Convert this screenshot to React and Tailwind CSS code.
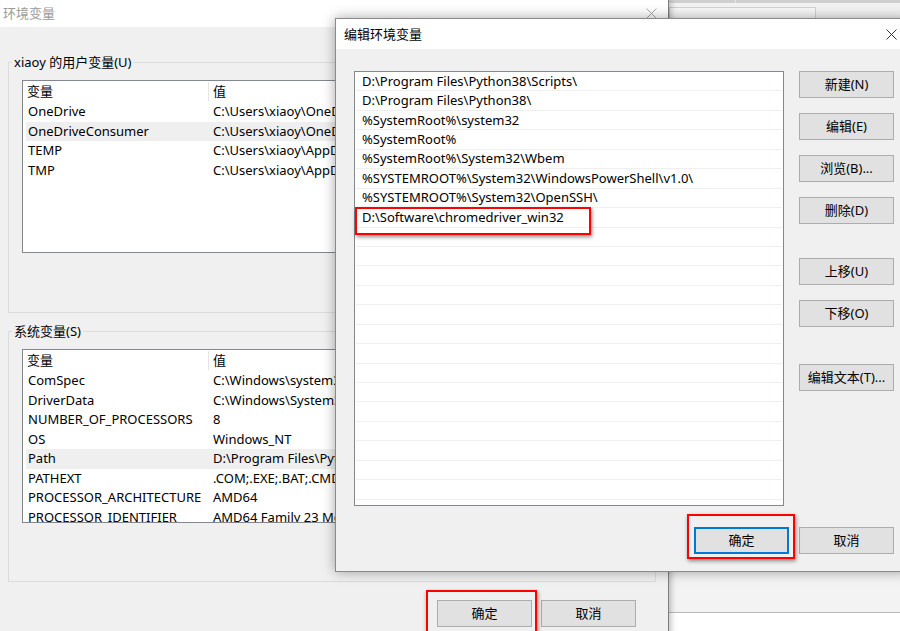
import React from "react";

const userVars = [
  ["OneDrive", "C:\\Users\\xiaoy\\OneDrive"],
  ["OneDriveConsumer", "C:\\Users\\xiaoy\\OneDrive"],
  ["TEMP", "C:\\Users\\xiaoy\\AppData\\Local\\Temp"],
  ["TMP", "C:\\Users\\xiaoy\\AppData\\Local\\Temp"],
];

const systemVars = [
  ["ComSpec", "C:\\Windows\\system32\\cmd.exe"],
  ["DriverData", "C:\\Windows\\System32\\Drivers\\DriverData"],
  ["NUMBER_OF_PROCESSORS", "8"],
  ["OS", "Windows_NT"],
  ["Path", "D:\\Program Files\\Python38\\Scripts\\;D:\\Program Files\\Python38\\"],
  ["PATHEXT", ".COM;.EXE;.BAT;.CMD;.VBS;.VBE;.JS;.JSE;.WSF;.WSH;.MSC"],
  ["PROCESSOR_ARCHITECTURE", "AMD64"],
  ["PROCESSOR_IDENTIFIER", "AMD64 Family 23 Model 96 Stepping 1, AuthenticAMD"],
];

const paths = [
  "D:\\Program Files\\Python38\\Scripts\\",
  "D:\\Program Files\\Python38\\",
  "%SystemRoot%\\system32",
  "%SystemRoot%",
  "%SystemRoot%\\System32\\Wbem",
  "%SYSTEMROOT%\\System32\\WindowsPowerShell\\v1.0\\",
  "%SYSTEMROOT%\\System32\\OpenSSH\\",
  "D:\\Software\\chromedriver_win32",
];

function CloseIcon({ color }) {
  return (
    <svg width="11" height="11" viewBox="0 0 11 11">
      <path d="M0.5 0.5 L10.5 10.5 M10.5 0.5 L0.5 10.5" stroke={color} strokeWidth="1" fill="none" />
    </svg>
  );
}

function WinButton({ children, focused, className = "" }) {
  return (
    <div
      className={
        "w-[95px] h-[27px] flex items-center justify-center bg-[#e1e1e1] border " +
        (focused ? "border-[#0078d7] ring-1 ring-inset ring-[#0078d7] " : "border-[#adadad] ") +
        className
      }
    >
      {children}
    </div>
  );
}

function VarList({ rows, highlight, height }) {
  return (
    <div className={"w-[620px] bg-white border border-[#828790] overflow-hidden " + height}>
      <div className="flex h-[21px] items-center">
        <div className="w-[186px] h-[19px] pl-[4px] flex items-center border-r border-[#e5e5e5]">变量</div>
        <div className="pl-[4px]">值</div>
      </div>
      {rows.map(([name, value]) => (
        <div
          key={name}
          className={
            "ml-[3px] flex h-[19.5px] items-center whitespace-nowrap " +
            (name === highlight ? "bg-[#efefef]" : "")
          }
        >
          <span className="w-[187px] pl-[2px]">{name}</span>
          <span>{value}</span>
        </div>
      ))}
    </div>
  );
}

export default function App() {
  return (
    <div className="relative w-[900px] h-[631px] overflow-hidden bg-[#f3f3f3] text-[13px] leading-none text-black font-['Noto_Sans','Noto_Sans_CJK_SC',sans-serif]">
      {/* window behind, on the right */}
      <div className="absolute left-[668px] top-0 w-[232px] h-[631px] flex flex-col bg-[#f3f3f3]">
        <div className="h-[3px] flex bg-[#cfcfcf]">
          <div className="w-[68px] border-r border-[#e6e6e6]" />
        </div>
        <div className="mt-[4px] ml-[1px] w-[147px] h-[12px] border border-[#d2d2d2] bg-[#f7f7f7]" />
        <div className="flex-1" />
        <div className="h-[19px] border-t border-[#b9b9b9] bg-white" />
      </div>

      {/* 环境变量 window */}
      <div className="absolute left-0 top-0 w-[669px] h-[640px] flex flex-col bg-[#f0f0f0] border-r border-[#7d7d7d] shadow-[2px_0_6px_rgba(0,0,0,0.25)]">
        <div className="h-[27px] bg-white flex items-center justify-between pl-[3px] pr-[11px]">
          <span className="text-[#9b9b9b]">环境变量</span>
          <CloseIcon color="#a5a5a5" />
        </div>

        <div className="pl-[8px]">
          <fieldset className="mt-[26px] w-[648px] h-[260px] border border-[#dcdcdc]">
            <legend className="ml-[3px] px-[2px] leading-[18px]">xiaoy 的用户变量(U)</legend>
            <div className="mt-[9px] ml-[13px]">
              <VarList rows={userVars} highlight="OneDriveConsumer" height="h-[173px]" />
            </div>
          </fieldset>

          <fieldset className="mt-[9px] w-[648px] h-[260px] border border-[#dcdcdc]">
            <legend className="ml-[3px] px-[2px] leading-[18px]">系统变量(S)</legend>
            <div className="mt-[9px] ml-[13px]">
              <VarList rows={systemVars} highlight="Path" height="h-[174px]" />
            </div>
          </fieldset>
        </div>

        <div className="mt-[18px] pr-[32px] flex justify-end gap-[9px]">
          <WinButton>确定</WinButton>
          <WinButton>取消</WinButton>
        </div>
      </div>

      {/* 编辑环境变量 dialog */}
      <div className="absolute left-[335px] top-[18px] w-[575px] h-[554px] flex flex-col bg-[#f0f0f0] border border-[#8a8a8a] shadow-[0_0_12px_rgba(0,0,0,0.35)]">
        <div className="h-[30px] bg-white flex items-center justify-between pl-[8px] pr-[11px]">
          <span>编辑环境变量</span>
          <div className="mr-[1px]">
            <CloseIcon color="#333333" />
          </div>
        </div>

        <div className="ml-[18px] mt-[22px] w-[540px] flex flex-col">
          <div className="flex gap-[15px]">
            <div className="w-[431px] h-[435px] bg-white border border-[#828790] overflow-hidden">
              {Array.from({ length: 23 }).map((_, i) => (
                <div
                  key={i}
                  className="mx-[1px] h-[19.45px] pl-[6px] flex items-center border-b border-[#efefef] whitespace-nowrap"
                >
                  {paths[i] || ""}
                </div>
              ))}
            </div>

            <div className="flex flex-col">
              <WinButton>新建(N)</WinButton>
              <WinButton className="mt-[15px]">编辑(E)</WinButton>
              <WinButton className="mt-[15px]">浏览(B)...</WinButton>
              <WinButton className="mt-[15px]">删除(D)</WinButton>
              <WinButton className="mt-[34px]">上移(U)</WinButton>
              <WinButton className="mt-[15px]">下移(O)</WinButton>
              <WinButton className="mt-[37px]">编辑文本(T)...</WinButton>
            </div>
          </div>

          <div className="mt-[21px] flex justify-end gap-[10px]">
            <WinButton focused>确定</WinButton>
            <WinButton>取消</WinButton>
          </div>
        </div>
      </div>

      {/* red annotation boxes */}
      <div className="absolute left-[355px] top-[207px] w-[236px] h-[28px] border-2 border-[#ff0000] shadow-[1px_2px_4px_rgba(0,0,0,0.45)]" />
      <div className="absolute left-[687px] top-[514px] w-[108px] h-[45px] border-2 border-[#ff0000] shadow-[1px_2px_4px_rgba(0,0,0,0.45)]" />
      <div className="absolute left-[426px] top-[590px] w-[111px] h-[50px] border-2 border-[#ff0000] shadow-[1px_2px_4px_rgba(0,0,0,0.45)]" />
    </div>
  );
}
